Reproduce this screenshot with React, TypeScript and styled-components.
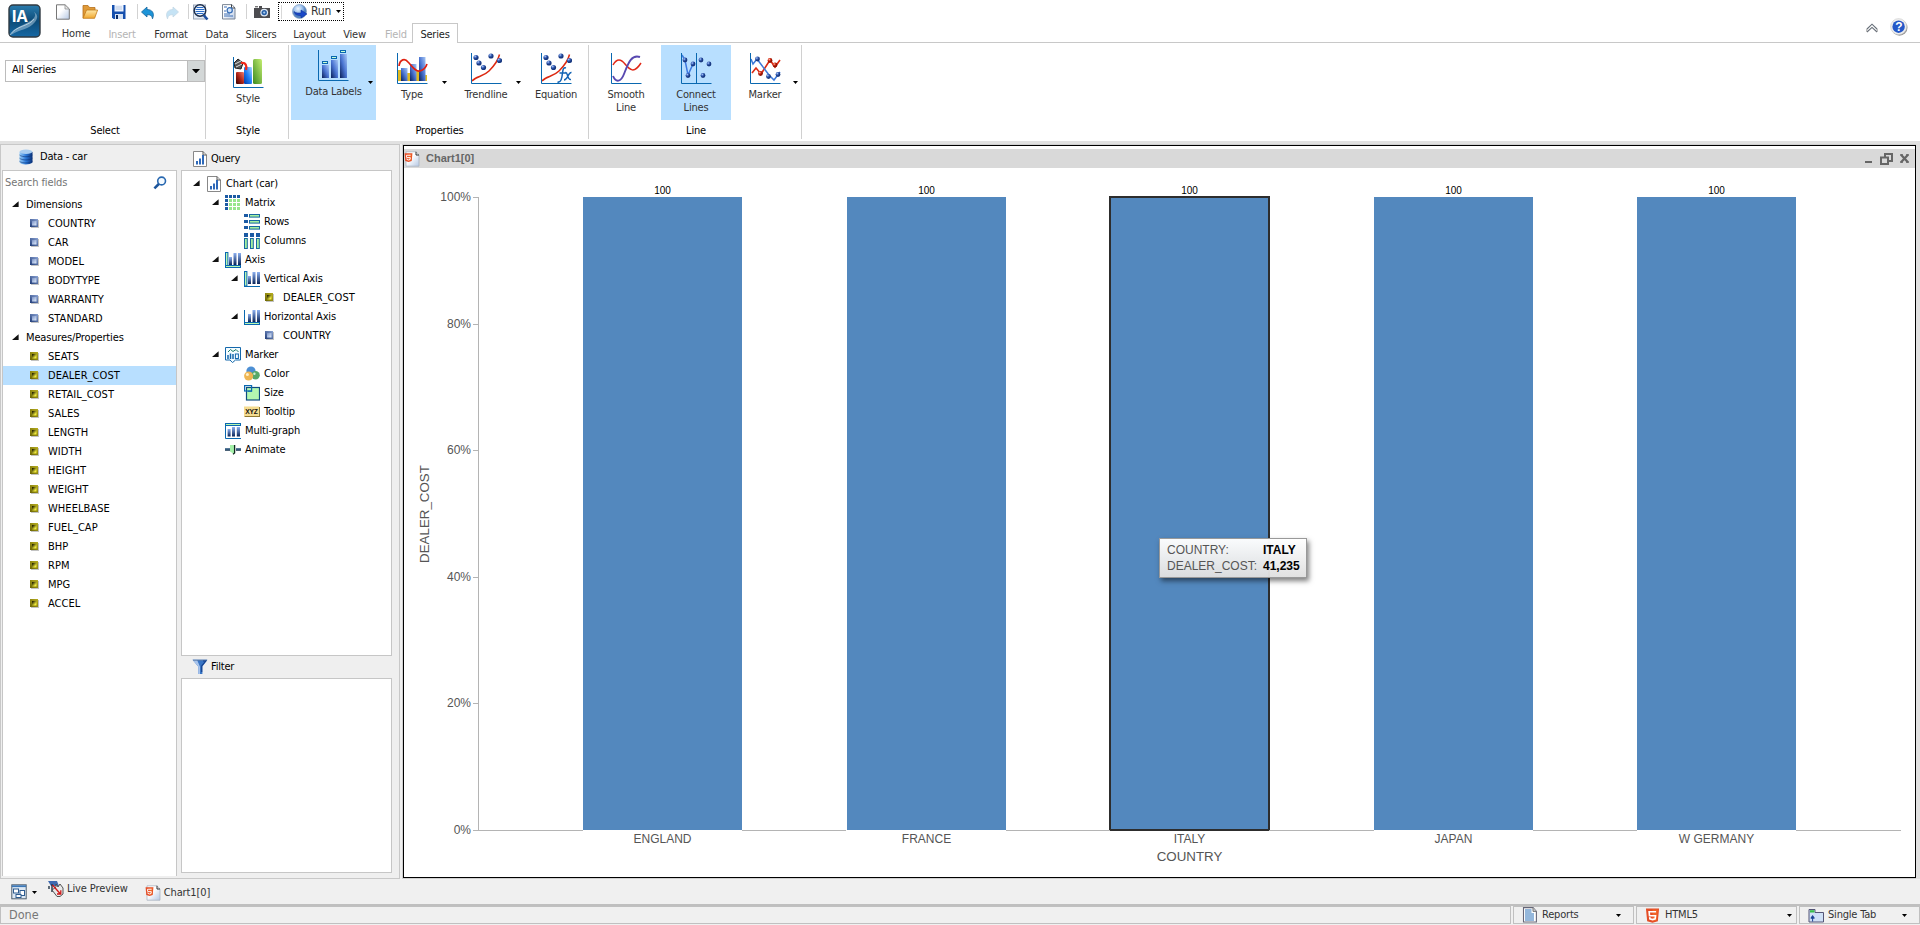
import React from 'react';
import styled, { createGlobalStyle } from 'styled-components';

const Global = createGlobalStyle`
  * { box-sizing: border-box; }
  html, body { margin: 0; padding: 0; overflow: hidden; background: #fff; }
  body { font-family: 'DejaVu Sans Condensed', 'DejaVu Sans', sans-serif; font-size: 11px; line-height: 14px; color: #000; letter-spacing: -0.2px; }
  svg { display: block; flex: none; }
`;

/* ---------- shell ---------- */
const Shell = styled.div`
  width: 1920px; height: 925px; display: flex; flex-direction: column; background: #fff; white-space: nowrap; overflow: hidden;
`;
const Header = styled.header`
  height: 43px; display: flex; border-bottom: 1px solid #c8c8c8; flex: none;
`;
const LogoBox = styled.div`width: 48px; padding: 4px 0 0 8px;`;
const HeaderMain = styled.div`flex: 1; display: flex; flex-direction: column;`;
const QuickBar = styled.div`height: 23px; flex: none; display: flex; align-items: flex-start; padding-top: 2px;`;
const QuickIcon = styled.div<{ $gap: number }>`margin-left: ${p => p.$gap}px; padding-top: 2px;`;
const QuickSep = styled.div<{ $gap: number }>`width: 1px; height: 15px; margin: 2px 0 0 ${p => p.$gap}px; background: #d2d2d2;`;
const RunButton = styled.div`
  width: 66px; height: 19px; margin-left: 8px; border: 1px dotted #000; display: flex; align-items: center; padding-left: 2px; color: #333;
`;
const RunSep = styled.div`width: 1px; height: 14px; background: #d8d8d8; margin-right: 10px;`;
const RunLabel = styled.span`font-size: 12px; width: 25px; margin: -2px 0 0 3px; letter-spacing: -0.2px;`;
const Tabs = styled.nav`height: 20px; flex: none; display: flex; align-items: stretch;`;
const Tab = styled.div<{ $w: number; $muted?: boolean; $active?: boolean; $up?: boolean }>`
  width: ${p => p.$w}px; height: 20px; display: flex; align-items: center; justify-content: center;
  padding-top: ${p => (p.$up ? 2 : 4)}px;
  color: ${p => (p.$muted ? '#b4b4b4' : '#333')};
  ${p => p.$active && 'padding-top: 3px; border: 1px solid #c8c8c8; border-bottom: 0; background: #fff; color: #222;'}
`;
const HeaderTools = styled.div`width: 54px; display: flex; gap: 12px; padding-top: 18px;`;
const CollapseBox = styled.div`padding-top: 5px;`;

/* ---------- ribbon ---------- */
const Ribbon = styled.section`height: 98px; display: flex; padding-top: 2px; flex: none;`;
const Group = styled.div<{ $w: number; $pad?: number }>`
  width: ${p => p.$w}px; height: 94px; border-right: 1px solid #d0d0d0; display: flex; flex-direction: column;
  padding-left: ${p => p.$pad || 0}px;
`;
const GroupBody = styled.div`height: 75px; flex: none; display: flex; align-items: stretch;`;
const GroupLabel = styled.div<{ $shift?: number }>`height: 19px; line-height: 22px; text-align: center; padding-left: ${p => p.$shift || 0}px;`;
const Combo = styled.div`
  width: 200px; height: 22px; margin: 15px 0 0 5px; border: 1px solid #bcbcbc; display: flex; line-height: 17px; padding-left: 6px;
`;
const ComboValue = styled.div`flex: 1;`;
const ComboButton = styled.div`
  width: 17px; background: #d3d7d7; border-left: 1px solid #bcbcbc; display: flex; align-items: center; justify-content: center;
`;
const Tool = styled.div<{ $w: number; $pad: number; $on?: boolean }>`
  width: ${p => p.$w}px; padding-left: ${p => p.$pad}px; display: flex; background: ${p => (p.$on ? '#b8dfff' : 'transparent')};
`;
const ToolMain = styled.div<{ $w: number; $top: number }>`
  width: ${p => p.$w}px; flex: none; padding-top: ${p => p.$top}px; display: flex; flex-direction: column; align-items: center; gap: 4px;
  text-align: center; line-height: 13px; color: #333;
`;
const ToolCaret = styled.div`width: 11px; margin-left: auto; padding: 36px 0 0 3px;`;

/* ---------- workspace ---------- */
const Workspace = styled.main`height: 738px; display: flex; background: #efefef; border-top: 3px solid #e1e1e1; flex: none;`;
const Side = styled.aside`
  width: 400px; height: 735px; border: 1px solid #c8c8c8; display: flex; padding-left: 1px;
`;
const DataColumn = styled.div`width: 175px; display: flex; flex-direction: column; height: 731px;`;
const QueryColumn = styled.div`width: 211px; margin-left: 4px; display: flex; flex-direction: column;`;
const PanelTitle = styled.div<{ $h: number; $left: number; $gap: number; $top?: number; $bottom?: number }>`
  height: ${p => p.$h}px; flex: none; display: flex; align-items: center; gap: ${p => p.$gap}px;
  padding: ${p => p.$top || 0}px 0 ${p => p.$bottom || 0}px ${p => p.$left}px;
`;
const Box = styled.div<{ $h?: number; $open?: boolean }>`
  ${p => (p.$h ? `height: ${p.$h}px;` : 'flex: 1;')}
  background: #fff; border: 1px solid #c6c6c6; ${p => p.$open && 'border-bottom: 0;'}
`;
const Search = styled.div`
  height: 24px; display: flex; justify-content: space-between; align-items: center; padding: 0 9px 0 2px; color: #757575; letter-spacing: -0.1px;
`;
const Row = styled.div<{ $pad: number; $on?: boolean }>`
  height: 19px; display: flex; align-items: center; padding-left: ${p => p.$pad}px; background: ${p => (p.$on ? '#b8dfff' : 'transparent')};
`;
const ArrowSlot = styled.span`width: 13px; flex: none;`;
const RowText = styled.span<{ $gap: number; $field?: boolean }>`
  margin-left: ${p => p.$gap}px; padding-top: 0; letter-spacing: ${p => (p.$field ? 0.05 : -0.15)}px;
`;
const TreePad = styled.div`padding-top: 3px;`;

/* ---------- chart window ---------- */
const ChartWindow = styled.section`
  width: 1513px; height: 733px; margin: 1px 0 0 3px; border: 1px solid #000; background: #fff; padding-top: 3px; box-shadow: 0 0 0 1px #d0d0d0;
`;
const ChartHead = styled.div`
  height: 19px; background: #d9d9d9; display: flex; align-items: center; padding: 0 6px 0 0; color: #666;
`;
const ChartName = styled.b`flex: 1; margin: -1px 0 0 6px; font: bold 11px/14px 'Liberation Sans', Arial, sans-serif; letter-spacing: 0;`;
const WindowButtons = styled.div`display: flex; gap: 7px; align-items: center;`;
const Plot = styled.div`position: relative; width: 1511px; height: 708px;`;
const Tip = styled.div`
  position: absolute; left: 755px; top: 370px; width: 148px; height: 40px; padding: 3px 7px; border: 1px solid #999;
  background: linear-gradient(rgba(255,255,255,.97), rgba(224,224,224,.96)); box-shadow: 2px 3px 5px rgba(0,0,0,.5);
  display: grid; grid-template-columns: 96px auto; font: 12px/16px 'Liberation Sans', Arial, sans-serif; letter-spacing: 0; color: #555;
  b { color: #000; }
`;
const Gutter = styled.div`width: 4px; margin-left: auto; background: #e1e1e1;`;

/* ---------- footer ---------- */
const OutputBar = styled.div`height: 25px; background: #f0f0f0; display: flex; color: #333; padding-left: 11px; flex: none;`;
const OutputItem = styled.div<{ $left: number; $top: number; $gap: number }>`
  display: flex; align-items: center; height: 18px; gap: ${p => p.$gap}px; margin: ${p => p.$top}px 0 0 ${p => p.$left}px; letter-spacing: -0.1px;
`;
const StatusBar = styled.footer`height: 21px; border-top: 2px solid #bfbfbf; background: #f0f0f0; display: flex; gap: 2px; flex: none;`;
const Cell = styled.div<{ $w: number; $end?: number }>`
  width: ${p => p.$w}px; height: 18px; border: 1px solid #c0c0c0; display: flex; align-items: center; padding: 0 ${p => p.$end || 12}px 0 8px; color: #333;
`;
const Done = styled.span`font-size: 12.5px; color: #777; letter-spacing: 0;`;
const CellText = styled.span<{ $gap?: number }>`flex: 1; margin-left: ${p => p.$gap || 4}px;`;

/* ---------- icons ---------- */
const Defs = () => (
  <svg width="0" height="0" style={{ position: 'absolute' }}>
    <defs>
      <linearGradient id="logo" x1="0" y1="0" x2="0" y2="1"><stop offset="0" stopColor="#2a7cae" /><stop offset=".5" stopColor="#0c4b78" /><stop offset="1" stopColor="#1668a4" /></linearGradient>
      <linearGradient id="page" x1="0" y1="0" x2="1" y2="1"><stop offset=".4" stopColor="#fff" /><stop offset="1" stopColor="#b5c8e4" /></linearGradient>
      <linearGradient id="bar" x1="1" y1="0" x2="0" y2="1"><stop offset="0" stopColor="#a8c8f4" /><stop offset=".5" stopColor="#4a74d2" /><stop offset="1" stopColor="#0a1f58" /></linearGradient>
      <linearGradient id="barV" x1="0" y1="0" x2="0" y2="1"><stop offset="0" stopColor="#8cb0f0" /><stop offset="1" stopColor="#0a2458" /></linearGradient>
      <linearGradient id="red" x1="0" y1="1" x2="1" y2="0"><stop offset="0" stopColor="#300" /><stop offset=".5" stopColor="#b02418" /><stop offset="1" stopColor="#f08070" /></linearGradient>
      <linearGradient id="blue" x1="0" y1="1" x2="1" y2="0"><stop offset="0" stopColor="#003aa8" /><stop offset=".5" stopColor="#2080f8" /><stop offset="1" stopColor="#a8d8ff" /></linearGradient>
      <linearGradient id="green" x1="0" y1="1" x2="1" y2="0"><stop offset="0" stopColor="#3c8a20" /><stop offset="1" stopColor="#c4ee70" /></linearGradient>
      <linearGradient id="folder" x1="0" y1="0" x2="0" y2="1"><stop offset="0" stopColor="#ffe8a8" /><stop offset="1" stopColor="#f0a830" /></linearGradient>
      <linearGradient id="db" x1="0" y1="0" x2="1" y2="0"><stop offset="0" stopColor="#9cd0fa" /><stop offset=".5" stopColor="#2a78d8" /><stop offset="1" stopColor="#0a3078" /></linearGradient>
      <linearGradient id="dimOut" x1="1" y1="0" x2="0" y2="1"><stop offset="0" stopColor="#8ca4d4" /><stop offset="1" stopColor="#203c78" /></linearGradient>
      <linearGradient id="dimIn" x1="0" y1="0" x2="1" y2="1"><stop offset="0" stopColor="#7890c4" /><stop offset="1" stopColor="#e4f0ff" /></linearGradient>
      <linearGradient id="meaOut" x1="1" y1="0" x2="0" y2="1"><stop offset="0" stopColor="#b8ae20" /><stop offset="1" stopColor="#6c6604" /></linearGradient>
      <linearGradient id="meaIn" x1="0" y1="0" x2="1" y2="1"><stop offset=".15" stopColor="#2c2a00" /><stop offset=".75" stopColor="#f4ee40" /></linearGradient>
      <radialGradient id="ball" cx=".35" cy=".3"><stop offset="0" stopColor="#b8d0f8" /><stop offset=".5" stopColor="#3c64bc" /><stop offset="1" stopColor="#183880" /></radialGradient>
      <radialGradient id="redBall" cx=".35" cy=".3"><stop offset="0" stopColor="#ffc0b0" /><stop offset=".5" stopColor="#d83018" /><stop offset="1" stopColor="#901000" /></radialGradient>
      <radialGradient id="sphere" cx=".4" cy=".3"><stop offset="0" stopColor="#f0f8ff" /><stop offset=".6" stopColor="#9cc0ec" /><stop offset="1" stopColor="#5080c0" /></radialGradient>
    </defs>
  </svg>
);

const Logo = () => (
  <svg width="33" height="34" viewBox="0 0 33 34">
    <rect x="1" y="1" width="31" height="32" rx="4" fill="url(#logo)" stroke="#303a42" strokeWidth="1.4" />
    <path d="M26 8 C30 13 23 17 17 20 C10 23 4 26 3 31 C12 25 21 26 27 18 C31 13 29 10 26 8Z" fill="#b9d4e5" opacity=".5" />
    <path d="M2 31 C7 22 22 22 26 15" fill="none" stroke="#d4e7f2" strokeWidth="1" opacity=".7" />
    <text x="3.5" y="17.5" fontFamily="Open Sans, sans-serif" fontWeight="700" fontSize="16.5" textLength="16" lengthAdjust="spacingAndGlyphs" fill="#fff">IA</text>
  </svg>
);
const Caret = ({ w = 5 }: { w?: number }) => (
  <svg width={w} height={(w + 1) / 2} viewBox={`0 0 ${w} ${(w + 1) / 2}`}><path d={`M0 0H${w}L${w / 2} ${(w + 1) / 2}Z`} fill="#000" /></svg>
);
const NewIcon = () => (
  <svg width="16" height="16" viewBox="0 0 16 16"><path d="M1.5 .8H10L14.3 5V15.2H1.5Z" fill="url(#page)" stroke="#777" /><path d="M10 .8V5H14.3Z" fill="#e8e8e8" stroke="#888" strokeWidth=".7" /></svg>
);
const OpenIcon = () => (
  <svg width="16" height="16" viewBox="0 0 16 16"><path d="M1 14V1.5H6L7.5 3.5H13V7" fill="#e09a38" stroke="#b5701c" strokeWidth=".8" /><path d="M1 14.3L4.5 6H15.6L12.6 14.3Z" fill="url(#folder)" stroke="#c07818" strokeWidth=".8" /></svg>
);
const SaveIcon = () => (
  <svg width="16" height="16" viewBox="0 0 16 16"><path d="M1 1H14.5V15H2.5L1 13.5Z" fill="#1650ae" /><rect x="3.5" y="1" width="9" height="6.5" fill="#eef4ff" /><path d="M4.5 3H11M4.5 5H11" stroke="#b8c8e0" /><rect x="4" y="10" width="8" height="5" fill="#d7e3f4" /><rect x="5" y="11" width="2" height="4" fill="#0a2c68" /></svg>
);
const UndoIcon = ({ faded, flip }: { faded?: boolean; flip?: boolean }) => (
  <svg width="14" height="16" viewBox="0 0 14 16" opacity={faded ? 0.25 : 1}>
    <path transform={flip ? 'translate(14 0) scale(-1 1)' : undefined} d="M.5 8L6 3V5.5C11 5.5 14 9 11.5 14.8C11 11.5 9.5 10.6 6 10.7V13Z" fill="#1d94d8" stroke="#17649c" strokeWidth=".8" />
  </svg>
);
const PreviewIcon = () => (
  <svg width="17" height="17" viewBox="0 0 17 17"><rect x="1.5" y="1" width="12" height="14" fill="#e4ebf5" stroke="#9aa6b8" /><circle cx="8" cy="6.5" r="5.8" fill="#eef6ff" stroke="#1a2b48" strokeWidth="1.4" /><path d="M4.5 3.5H11.5M3.5 5.5H12.5M3.5 7.5H12.5M4.5 9.5H11.5" stroke="#2b6cc8" strokeWidth="1" /><path d="M11.5 11L15.5 15.5" stroke="#1c4ea0" strokeWidth="2.6" /></svg>
);
const DocIcon = () => (
  <svg width="16" height="16" viewBox="0 0 16 16"><path d="M1.5 .6H11L14 4V15H1.5Z" fill="url(#page)" stroke="#7c8796" /><path d="M10.5 .6V4H14" fill="none" stroke="#444" /><path d="M3 3H6M3 10H9M3 12H12M3 7H5" stroke="#3c6fb4" /><circle cx="8.7" cy="6.2" r="2.6" fill="#d6e6f8" stroke="#3a70b8" strokeWidth="1.3" /></svg>
);
const CameraIcon = () => (
  <svg width="16" height="16" viewBox="0 0 16 16"><path d="M0 4H5V2H8V4H16V14H0Z" fill="#4c4c50" /><rect x="1" y="2" width="3" height="1.4" fill="#777" /><circle cx="10.2" cy="8.6" r="3.9" fill="#dfe9f4" /><circle cx="10.2" cy="8.6" r="2.7" fill="#2860a8" /><circle cx="10.2" cy="8.6" r="1.1" fill="#a8ccee" /></svg>
);
const RunIcon = () => (
  <svg width="16" height="16" viewBox="0 0 16 16"><circle cx="7.5" cy="7.5" r="7" fill="url(#sphere)" stroke="#7f98b8" strokeWidth=".6" /><path d="M2 7.5C4 9.3 6 9 9 9V6L15 10L9 14V11.5C6 11.7 2.5 11 2 7.5Z" fill="#1a48c8" stroke="#0a2c90" strokeWidth=".5" /></svg>
);
const HelpIcon = () => (
  <svg width="18" height="18" viewBox="0 0 18 18"><circle cx="9.5" cy="9.7" r="8" fill="#9a9a9a" /><circle cx="8.6" cy="8.6" r="8" fill="#eee" stroke="#ccc" strokeWidth=".6" /><circle cx="8.6" cy="8.7" r="6.2" fill="#2458c8" /><text x="8.7" y="13" fontFamily="Liberation Sans, sans-serif" fontSize="12" fontWeight="700" textAnchor="middle" fill="#fff">?</text></svg>
);
const CollapseIcon = () => (
  <svg width="12" height="10" viewBox="0 0 12 10"><path d="M1 6L6 1.2L11 6M1 9L6 4.4L11 9" fill="none" stroke="#666e78" strokeWidth="1.1" /><path d="M.8 5.8V8.8M11.2 5.8V8.8" stroke="#888" strokeWidth=".8" /></svg>
);

/* 31px ribbon drawings share one L-shaped axis */
const Frame = ({ children }: { children: React.ReactNode }) => (
  <svg width="31" height="31" viewBox="0 0 31 31">{children}<path d="M.5 0V30.5H30.5" fill="none" stroke="#0a68b0" /></svg>
);
const Balls = ({ at, r = 2.6, fill = 'url(#ball)' }: { at: number[][]; r?: number; fill?: string }) => (
  <>{at.map(([x, y]) => <circle key={`${x}-${y}`} cx={x} cy={y} r={r} fill={fill} />)}</>
);
const Dots = () => (<><path d="M1 28C5 23 12 24 18 18C23 13 27 8 28.5 1.5" fill="none" stroke="#dc2810" strokeWidth="1.5" /><Balls at={[[5, 4.5], [8, 10], [12.5, 14.5], [20, 3], [28.5, 7.5]]} /></>);
const StyleIcon = () => (
  <Frame><rect x="20" y="2" width="9" height="25" rx="1.5" fill="url(#green)" /><rect x="11" y="10" width="8" height="17" rx="1" fill="url(#blue)" /><rect x="3" y="15" width="8" height="12" rx="1" fill="url(#red)" /><path d="M1 6L5 2L10 6L8 12L2 11Z" fill="#555" stroke="#222" /><path d="M2 7L8 4M3 10L9 7" stroke="#ddd" /><path d="M8 6C13 5 14 9 13 13" fill="none" stroke="#f02818" strokeWidth="2.2" /></Frame>
);
const LabelsIcon = () => (
  <Frame><rect x="4" y="15" width="7" height="13" fill="url(#bar)" /><rect x="13" y="10" width="7" height="18" fill="url(#bar)" /><rect x="22" y="4" width="7" height="24" fill="url(#bar)" /><g fill="#c8ffd0" stroke="#0a68b0"><rect x="4.5" y="11.5" width="5" height="2" /><rect x="13.5" y="6.5" width="5" height="2" /><rect x="22.5" y=".5" width="5" height="2" /></g></Frame>
);
const TypeIcon = () => (
  <Frame><path d="M1 17H4V22H10V20H13V24H19V18H22V22H30V28H1Z" fill="#dfb921" /><rect x="4" y="15" width="6.5" height="13" fill="url(#bar)" /><rect x="13" y="11" width="6.5" height="17" fill="url(#bar)" /><rect x="22" y="4" width="6.5" height="24" fill="url(#bar)" /><path d="M2 13C3 6 8 5 11 9C15 13 18 19 23 18C27 17 29 14 30 11" fill="none" stroke="#e02010" strokeWidth="1.7" /></Frame>
);
const TrendIcon = () => <Frame><Dots /></Frame>;
const EquationIcon = () => (
  <Frame><Dots /><path d="M25 15C22 14 22 17 21.5 20C21 25 20 30 16.5 29M18.5 20H25M24.5 19.5C27 19 26 27 30 26.5M30.5 19.5C27 19 27 27 23 27" fill="none" stroke="#1464b4" strokeWidth="1.5" /></Frame>
);
const SmoothIcon = () => (
  <Frame><path d="M2 12C6 5 10 6 14 11C19 17 23 21 30 10" fill="none" stroke="#e02818" strokeWidth="1.5" /><path d="M2 23C5 30 10 29 13 21C17 11 20 1 29 4" fill="none" stroke="#5848b0" strokeWidth="1.9" /></Frame>
);
const ConnectIcon = () => (
  <Frame><path d="M15.5 0V30" stroke="#0a68b0" /><path d="M1 2L4 7L7 22L12 11L14 10" fill="none" stroke="#3c78e0" strokeWidth="1.5" /><Balls at={[[4, 7], [12, 11], [7, 22.5], [20, 7], [28, 11], [22, 22.5]]} r={2.4} /></Frame>
);
const MarkerIcon = () => (
  <Frame><path d="M2 20L6 15L11 21L20 7L25 14L30 7" fill="none" stroke="#dc2c14" strokeWidth="1.6" /><path d="M1 6L3 11L7 6L19 22L24 27L30 19" fill="none" stroke="#3c78d8" strokeWidth="1.5" /><Balls at={[[7.5, 6], [18.5, 23.5], [28, 21.5]]} r={2.4} /><Balls at={[[10.5, 20.5], [20, 7.5], [25, 12]]} r={2.4} fill="url(#redBall)" /></Frame>
);

/* 16px tree drawings */
const S = ({ children }: { children: React.ReactNode }) => <svg width="16" height="16" viewBox="0 0 16 16">{children}</svg>;
const ChartPage = () => (
  <S><path d="M1.5 .5H11L14.5 4V15.5H1.5Z" fill="#fff" stroke="#888" /><path d="M11 .5V4H14.5" fill="none" stroke="#555" /><rect x="4" y="10" width="2" height="3.5" fill="#2d68b8" /><rect x="7" y="7.5" width="2" height="6" fill="#2d68b8" /><rect x="10" y="4" width="2" height="9.5" fill="#2d68b8" /></S>
);
const FieldIcon = ({ measure }: { measure?: boolean }) => (
  <S><rect x="3" y="4" width="8" height="8" fill="#a8a8a8" opacity=".7" /><rect x="2" y="3" width="8" height="8" fill={measure ? 'url(#meaOut)' : 'url(#dimOut)'} /><rect x="4" y="5" width="4.5" height="4.5" fill={measure ? 'url(#meaIn)' : 'url(#dimIn)'} /></S>
);
const MatrixIcon = () => (
  <S>{[0, 4, 8, 12].map(x => [0, 4, 8, 12].map(y => <rect key={`${x}${y}`} x={x} y={y} width="3" height="3" fill={x === 0 || y === 0 ? '#1b5aa4' : '#96e68c'} />))}</S>
);
const RowsIcon = () => (
  <S>{[0, 6, 12].map(y => <g key={y}><rect x="0" y={y} width="4" height="3" fill="#1b5aa4" /><rect x="5.5" y={y + 0.5} width="10" height="2.6" fill="#a4f0a0" stroke="#1768a0" /></g>)}</S>
);
const ColumnsIcon = () => (
  <S>{[0, 6, 12].map(x => <g key={x}><rect x={x} y="0" width="4" height="4" fill="#1b5aa4" /><rect x={x + 0.5} y="5.5" width="2.8" height="10" fill="#a4f0a0" stroke="#1768a0" /></g>)}</S>
);
const AxisIcon = ({ v, h }: { v?: boolean; h?: boolean }) => (
  <S>
    <rect x="4" y="5" width="3" height="8" fill="url(#barV)" /><rect x="8.5" y="1" width="3" height="12" fill="url(#barV)" /><rect x="13" y="1" width="3" height="12" fill="url(#barV)" />
    {v ? <rect x=".5" y=".5" width="2.4" height="14.5" fill="#b8f8b0" stroke="#0a68b0" /> : <path d="M.5 1V15" stroke="#0a68b0" />}
    {h ? <rect x=".5" y="13.5" width="15" height="2" fill="#b8f8b0" stroke="#0a68b0" /> : <path d="M0 15.5H16" stroke="#0a68b0" />}
  </S>
);
const MarkerTree = () => (
  <S><path d="M.5 .5H15.5V13H10.5L7.5 15.6L5 13H.5Z" fill="#f4fcff" stroke="#1468ac" /><path d="M3 5L5.5 2.5L8 4.5L11 2.5L13.5 5" fill="none" stroke="#1c7c68" /><path d="M3 12V8M5.5 12V6.5M8 12V7" stroke="#1468ac" strokeWidth="1.5" /><rect x="10.4" y="7" width="3" height="4.5" fill="none" stroke="#1468ac" /></S>
);
const ColorIcon = () => (
  <S><circle cx="7" cy="5" r="4.6" fill="#4d8fd4" /><circle cx="11.6" cy="9.2" r="4.2" fill="#58a868" /><circle cx="4.6" cy="10" r="4.5" fill="#efb552" /><circle cx="3.4" cy="8.6" r="1.5" fill="#fff0c8" /><circle cx="10.4" cy="7.8" r="1.2" fill="#d0f0d0" /></S>
);
const SizeIcon = () => (
  <S><rect x="2.5" y="2.5" width="13" height="12.5" fill="#b4f8b0" stroke="#0f4c80" strokeWidth="1.2" /><rect x=".6" y=".6" width="7" height="5.4" fill="none" stroke="#0a68b0" strokeWidth="1.2" /><path d="M4 6.2H8" stroke="#0a68b0" /></S>
);
const TooltipIcon = () => (
  <S><rect x=".5" y="3" width="15.5" height="10" fill="#8f7830" /><rect x="0" y="2.5" width="15" height="9.5" fill="#f5dc90" /><text x="7.5" y="10" textAnchor="middle" fontFamily="Liberation Sans, sans-serif" fontSize="7.2" fontWeight="700" textLength="12.5" lengthAdjust="spacingAndGlyphs" fill="#111">XYZ</text></S>
);
const MultiIcon = () => (
  <S><rect x=".5" y=".5" width="15" height="2" fill="#b8f8b0" stroke="#0a68b0" /><path d="M.5 1V15.5H16" fill="none" stroke="#0a68b0" /><rect x="2.6" y="6" width="3" height="7.5" fill="url(#barV)" /><rect x="7" y="4" width="3" height="9.5" fill="url(#barV)" /><rect x="11.8" y="4" width="3.2" height="9.5" fill="url(#barV)" /></S>
);
const AnimateIcon = () => (
  <S><path d="M0 7.5H5M11 7.5H16" stroke="#12304c" strokeWidth="2.6" /><path d="M0 7H5M11 7H16" stroke="#6aa0cc" strokeWidth=".8" /><path d="M5 3H9V12L5 9.5Z" fill="#a4f0a8" /><path d="M9.6 3V11L8 12.2" fill="none" stroke="#102820" strokeWidth="1.3" /></S>
);
const DbIcon = () => (
  <S><path d="M1.5 3V13.5C3 16 12 16 14.5 13.5V3Z" fill="url(#db)" /><ellipse cx="8" cy="2.8" rx="6.5" ry="2.2" fill="#a8cdf0" /><path d="M1.5 6C4 8.3 12 8.3 14.5 6M1.5 9.2C4 11.5 12 11.5 14.5 9.2M1.5 12.3C4 14.5 12 14.5 14.5 12.3" fill="none" stroke="#0a3478" strokeWidth=".9" opacity=".65" /></S>
);
const SearchIcon = () => (
  <svg width="14" height="14" viewBox="0 0 14 14"><circle cx="8.6" cy="5" r="3.9" fill="#f4faff" stroke="#2968b0" strokeWidth="1.6" /><path d="M5.8 8L1.4 12.4" stroke="#1c559c" strokeWidth="2.5" /></svg>
);
const FilterIcon = () => (
  <S><path d="M.5 .8H15.5L10.4 7.5V15H6.2V7.5Z" fill="#3874c4" /><path d="M.5 .8H5L8 7.8V15H6.2V7.5Z" fill="#a8c4ec" /><path d="M1 1.2H15" stroke="#5c7ca8" /><path d="M11 2H13.8L9.7 7V13" fill="none" stroke="#16408c" strokeWidth="1.1" /></S>
);
const Shield = ({ s }: { s: number }) => (
  <svg width={s} height={s} viewBox="0 0 16 16"><path d="M1 .5H15L13.7 14L8 15.8L2.3 14Z" fill="#e44d26" /><path d="M8 1.7V14.5L12.6 13L13.7 1.7Z" fill="#f16529" /><path d="M11.8 4H4.4L4.8 8.2H11.2L10.8 11.5L8 12.4L5.2 11.5L5 9.8" fill="none" stroke="#fff" strokeWidth="1.7" /></svg>
);
const HtmlPage = () => (
  <S><path d="M2 .8H12L15 4V15.2H2Z" fill="url(#page)" stroke="#aab4c0" strokeWidth=".8" /><path d="M12 .8V4H15" fill="none" stroke="#333" /><svg x="0" y="2" width="9" height="10"><Shield s={9} /></svg></S>
);
const LayoutIcon = () => (
  <S><rect x=".8" y=".8" width="14.4" height="14" fill="#dce8f4" stroke="#50606e" /><path d="M.8 2.2H15" stroke="#3c78b8" strokeWidth="1.8" /><rect x="2.5" y="5" width="5" height="4" fill="#fff" stroke="#2e5c90" /><rect x="9" y="6.5" width="4.5" height="5" fill="#fff" stroke="#2e5c90" /><rect x="5" y="10.5" width="5" height="3" fill="#fff" stroke="#2e5c90" /></S>
);
const LiveIcon = () => (
  <S><path d="M0 0H9L11 5H3Z" fill="#3d69b0" /><path d="M1 5V8M4 3V11" stroke="#234" strokeWidth="1.4" /><path d="M4 9L8 6L8 3L10 6L12 3L15 7V13L12 15.5H9Z" fill="#e8e8e8" stroke="#444" strokeWidth=".9" /><path d="M4.5 4L12 12.5M12.8 9.2V13H9" stroke="#d01818" fill="none" strokeWidth="1.3" /></S>
);
const ReportIcon = () => (
  <S><path d="M1.5 .6H11L14.4 4.4V15H1.5Z" fill="#fff" stroke="#667" strokeWidth="1.1" /><path d="M11 .6V4.4H14.4" fill="#ccc" stroke="#777" /><path d="M3 3H9.5M3 5H9.5M3 7H12M3 9H12M3 11H12M3 13H12" stroke="#2a70b8" strokeWidth="1.1" /></S>
);
const TabIcon = () => (
  <S><path d="M1 15V2.5H7V5.5H15.5V15Z" fill="#cfe0f6" stroke="#557" /><rect x="2" y="3.2" width="4.4" height="2.3" fill="#38c048" /><path d="M4.6 14.5V10M2.9 11.2L4.6 8.6L6.3 11.2Z" stroke="#1c4494" fill="#1c4494" /></S>
);
const TreeArrow = () => <svg width="7" height="7" viewBox="0 0 7 7"><path d="M6.6 .2V6H0Z" fill="#111" /></svg>;
const WinIcons = () => (
  <WindowButtons>
    <svg width="8" height="12" viewBox="0 0 8 12"><path d="M0 9H7" stroke="#666" strokeWidth="2" /></svg>
    <svg width="13" height="12" viewBox="0 0 13 12"><path d="M5 5V1H12V8H8M1 4.5H8V11H1Z" fill="none" stroke="#666" strokeWidth="2" /></svg>
    <svg width="9" height="9" viewBox="0 0 9 9"><path d="M1 .7L8 8.3M8 .7L1 8.3" stroke="#666" strokeWidth="2.2" /><path d="M0 .8H3M6 .8H9M0 8.2H3M6 8.2H9" stroke="#666" strokeWidth="1.2" /></svg>
  </WindowButtons>
);

/* ---------- content ---------- */
const dimensions = ['COUNTRY', 'CAR', 'MODEL', 'BODYTYPE', 'WARRANTY', 'STANDARD'];
const measures = ['SEATS', 'DEALER_COST', 'RETAIL_COST', 'SALES', 'LENGTH', 'WIDTH', 'HEIGHT', 'WEIGHT', 'WHEELBASE', 'FUEL_CAP', 'BHP', 'RPM', 'MPG', 'ACCEL'];
const tree: [number, boolean, React.ReactNode, string][] = [
  [0, true, <ChartPage />, 'Chart (car)'],
  [1, true, <MatrixIcon />, 'Matrix'],
  [2, false, <RowsIcon />, 'Rows'],
  [2, false, <ColumnsIcon />, 'Columns'],
  [1, true, <AxisIcon v h />, 'Axis'],
  [2, true, <AxisIcon v />, 'Vertical Axis'],
  [3, false, <FieldIcon measure />, 'DEALER_COST'],
  [2, true, <AxisIcon h />, 'Horizontal Axis'],
  [3, false, <FieldIcon />, 'COUNTRY'],
  [1, true, <MarkerTree />, 'Marker'],
  [2, false, <ColorIcon />, 'Color'],
  [2, false, <SizeIcon />, 'Size'],
  [2, false, <TooltipIcon />, 'Tooltip'],
  [1, false, <MultiIcon />, 'Multi-graph'],
  [1, false, <AnimateIcon />, 'Animate'],
];
const countries = ['ENGLAND', 'FRANCE', 'ITALY', 'JAPAN', 'W GERMANY'];

/* The plot's top-left corner is the point (404,168) of the window. */
const StackedChart = () => {
  const top = 29, base = 662;
  return (
    <svg width="1511" height="708" viewBox="0 0 1511 708" fontFamily="Liberation Sans, Arial, sans-serif" letterSpacing="0" fontSize="12" fill="#555">
      {countries.map((c, i) => {
        const x = 179 + Math.round(i * 263.5);
        return (
          <g key={c}>
            <rect x={x} y={top} width="159" height={base - top} fill="#5388be" />
            {c === 'ITALY' && <rect x={x} y={top} width="159" height={base - top} fill="none" stroke="#2d2d2d" strokeWidth="2" />}
            <text x={x + 79.5} y="26" textAnchor="middle" fontSize="10" fill="#000">100</text>
            <text x={x + 79.5} y="675" textAnchor="middle">{c}</text>
          </g>
        );
      })}
      <g stroke="#b4b4b4">
        <path d="M74.5 29V662M69 662.5H179M338 662.5H442M602 662.5H706M865 662.5H970M1129 662.5H1233M1392 662.5H1497" />
        {[0, 1, 2, 3, 4].map(i => <path key={i} d={`M69 ${Math.round(29 + i * 126.6) + 0.5}H74`} />)}
      </g>
      {[0, 20, 40, 60, 80, 100].map(n => (
        <text key={n} x="67" y={Math.round(base - n * 6.33) + 4} textAnchor="end">{n}%</text>
      ))}
      <text x="785.5" y="693" textAnchor="middle" fontSize="13.33">COUNTRY</text>
      <text transform="translate(25 346) rotate(-90)" textAnchor="middle" fontSize="13.33">DEALER_COST</text>
    </svg>
  );
};

export default function App() {
  return (
    <Shell>
      <Global />
      <Defs />
      <Header>
        <LogoBox><Logo /></LogoBox>
        <HeaderMain>
          <QuickBar>
            <QuickIcon $gap={7}><NewIcon /></QuickIcon>
            <QuickIcon $gap={11}><OpenIcon /></QuickIcon>
            <QuickIcon $gap={13}><SaveIcon /></QuickIcon>
            <QuickSep $gap={10} />
            <QuickIcon $gap={3}><UndoIcon /></QuickIcon>
            <QuickIcon $gap={10}><UndoIcon faded flip /></QuickIcon>
            <QuickSep $gap={9} />
            <QuickIcon $gap={3}><PreviewIcon /></QuickIcon>
            <QuickIcon $gap={12}><DocIcon /></QuickIcon>
            <QuickSep $gap={9} />
            <QuickIcon $gap={7}><CameraIcon /></QuickIcon>
            <RunButton><RunSep /><RunIcon /><RunLabel>Run</RunLabel><Caret /></RunButton>
          </QuickBar>
          <Tabs>
            <Tab $w={56} $up>Home</Tab>
            <Tab $w={36} $muted>Insert</Tab>
            <Tab $w={62}>Format</Tab>
            <Tab $w={30}>Data</Tab>
            <Tab $w={58}>Slicers</Tab>
            <Tab $w={39}>Layout</Tab>
            <Tab $w={51}>View</Tab>
            <Tab $w={32} $muted>Field</Tab>
            <Tab $w={46} $active>Series</Tab>
          </Tabs>
        </HeaderMain>
        <HeaderTools><CollapseBox><CollapseIcon /></CollapseBox><HelpIcon /></HeaderTools>
      </Header>

      <Ribbon>
        <Group $w={206}>
          <GroupBody><Combo><ComboValue>All Series</ComboValue><ComboButton><Caret w={8} /></ComboButton></Combo></GroupBody>
          <GroupLabel $shift={5}>Select</GroupLabel>
        </Group>
        <Group $w={83}>
          <GroupBody><Tool $w={82} $pad={0}><ToolMain $w={84} $top={12}><StyleIcon />Style</ToolMain></Tool></GroupBody>
          <GroupLabel $shift={2}>Style</GroupLabel>
        </Group>
        <Group $w={300} $pad={2}>
          <GroupBody>
            <Tool $w={85} $pad={11} $on><ToolMain $w={63} $top={5}><LabelsIcon />Data Labels</ToolMain><ToolCaret><Caret /></ToolCaret></Tool>
            <Tool $w={74} $pad={14}><ToolMain $w={44} $top={8}><TypeIcon />Type</ToolMain><ToolCaret><Caret /></ToolCaret></Tool>
            <Tool $w={74} $pad={12}><ToolMain $w={48} $top={8}><TrendIcon />Trendline</ToolMain><ToolCaret><Caret /></ToolCaret></Tool>
            <Tool $w={64} $pad={0}><ToolMain $w={64} $top={8}><EquationIcon />Equation</ToolMain></Tool>
          </GroupBody>
          <GroupLabel>Properties</GroupLabel>
        </Group>
        <Group $w={213} $pad={2}>
          <GroupBody>
            <Tool $w={70} $pad={0}><ToolMain $w={70} $top={8}><SmoothIcon /><span>Smooth<br />Line</span></ToolMain></Tool>
            <Tool $w={70} $pad={0} $on><ToolMain $w={70} $top={8}><ConnectIcon /><span>Connect<br />Lines</span></ToolMain></Tool>
            <Tool $w={70} $pad={12}><ToolMain $w={44} $top={8}><MarkerIcon />Marker</ToolMain><ToolCaret><Caret /></ToolCaret></Tool>
          </GroupBody>
          <GroupLabel>Line</GroupLabel>
        </Group>
      </Ribbon>

      <Workspace>
        <Side>
          <DataColumn>
            <PanelTitle $h={25} $left={16} $gap={6} $bottom={1}><DbIcon />Data - car</PanelTitle>
            <Box $open>
              <Search>Search fields<SearchIcon /></Search>
              <Row $pad={9}><ArrowSlot><TreeArrow /></ArrowSlot><RowText $gap={1}>Dimensions</RowText></Row>
              {dimensions.map(d => <Row key={d} $pad={25}><FieldIcon /><RowText $gap={4} $field>{d}</RowText></Row>)}
              <Row $pad={9}><ArrowSlot><TreeArrow /></ArrowSlot><RowText $gap={1}>Measures/Properties</RowText></Row>
              {measures.map(m => <Row key={m} $pad={25} $on={m === 'DEALER_COST'}><FieldIcon measure /><RowText $gap={4} $field>{m}</RowText></Row>)}
            </Box>
          </DataColumn>
          <QueryColumn>
            <PanelTitle $h={25} $left={11} $gap={3} $top={2}><ChartPage />Query</PanelTitle>
            <Box $h={486}>
              <TreePad>
                {tree.map(([depth, open, icon, label], i) => (
                  <Row key={i} $pad={11 + 19 * depth}><ArrowSlot>{open && <TreeArrow />}</ArrowSlot>{icon}<RowText $gap={4} $field={depth === 3}>{label}</RowText></Row>
                ))}
              </TreePad>
            </Box>
            <PanelTitle $h={22} $left={11} $gap={3}><FilterIcon />Filter</PanelTitle>
            <Box $h={195} />
          </QueryColumn>
        </Side>
        <ChartWindow>
          <ChartHead><HtmlPage /><ChartName>Chart1[0]</ChartName><WinIcons /></ChartHead>
          <Plot>
            <StackedChart />
            <Tip><span>COUNTRY:</span><b>ITALY</b><span>DEALER_COST:</span><b>41,235</b></Tip>
          </Plot>
        </ChartWindow>
        <Gutter />
      </Workspace>

      <OutputBar>
        <OutputItem $left={0} $top={4} $gap={5}><LayoutIcon /><Caret /></OutputItem>
        <OutputItem $left={11} $top={1} $gap={3}><LiveIcon />Live Preview</OutputItem>
        <OutputItem $left={17} $top={5} $gap={3}><HtmlPage />Chart1[0]</OutputItem>
      </OutputBar>
      <StatusBar>
        <Cell $w={1511}><Done>Done</Done></Cell>
        <Cell $w={121}><ReportIcon /><CellText>Reports</CellText><Caret /></Cell>
        <Cell $w={161} $end={4}><Shield s={15} /><CellText $gap={5}>HTML5</CellText><Caret /></Cell>
        <Cell $w={121}><TabIcon /><CellText>Single Tab</CellText><Caret /></Cell>
      </StatusBar>
    </Shell>
  );
}
